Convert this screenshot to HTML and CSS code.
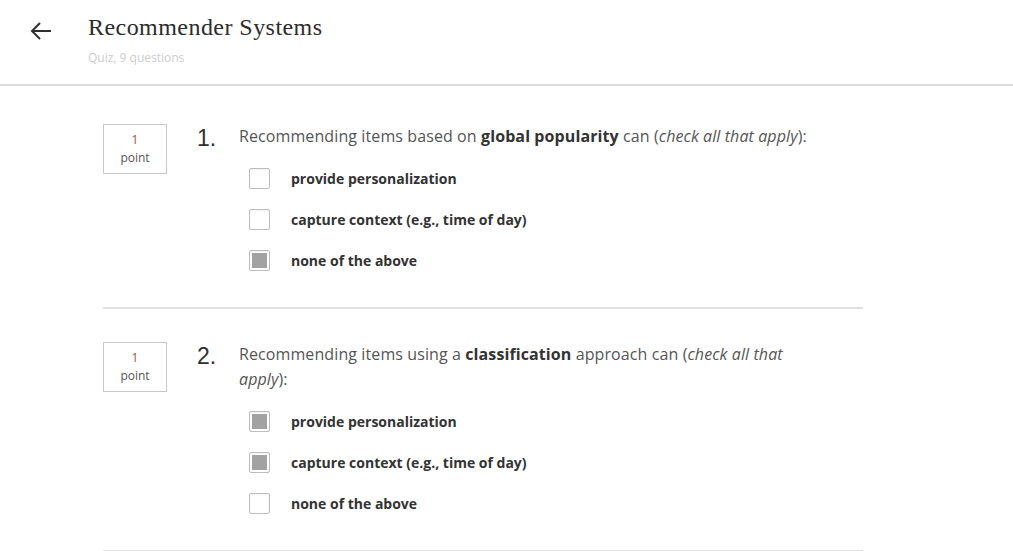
FILE: index.html
```html
<!DOCTYPE html>
<html>
<head>
<meta charset="utf-8">
<link rel="stylesheet" href="styles.css">
</head>
<body>
<header class="header">
  <a class="back" href="#" aria-label="Back">
    <svg width="22" height="20" viewBox="0 0 22 20"><path d="M21 10H2M10 2L2 10l8 8" fill="none" stroke="#2f2f2f" stroke-width="2"/></svg>
  </a>
  <div class="titles">
    <h1 class="title">Recommender Systems</h1>
    <div class="subtitle">Quiz, 9 questions</div>
  </div>
</header>
<main class="quiz">
  <section class="question">
    <div class="points"><span class="pnum">1</span><span class="plabel">point</span></div>
    <div class="qnum">1.</div>
    <div class="qbody">
      <p class="qtext">Recommending items based on <b>global popularity</b> can (<i>check all that apply</i>):</p>
      <ul class="options">
        <li class="option"><span class="cb"></span><span class="olabel">provide personalization</span></li>
        <li class="option"><span class="cb"></span><span class="olabel">capture context (e.g., time of day)</span></li>
        <li class="option"><span class="cb checked"></span><span class="olabel">none of the above</span></li>
      </ul>
    </div>
  </section>
  <section class="question">
    <div class="points"><span class="pnum">1</span><span class="plabel">point</span></div>
    <div class="qnum">2.</div>
    <div class="qbody">
      <p class="qtext">Recommending items using a <b>classification</b> approach can (<i>check all that apply</i>):</p>
      <ul class="options">
        <li class="option"><span class="cb checked"></span><span class="olabel">provide personalization</span></li>
        <li class="option"><span class="cb checked"></span><span class="olabel">capture context (e.g., time of day)</span></li>
        <li class="option"><span class="cb"></span><span class="olabel">none of the above</span></li>
      </ul>
    </div>
  </section>
</main>
</body>
</html>
```
FILE: styles.css
```css
* { box-sizing: border-box; }
html, body { margin: 0; padding: 0; background: #fff; }
body { font-family: "Open Sans", "Liberation Sans", sans-serif; color: #333; overflow: hidden; }

.header {
  height: 86px;
  border-bottom: 2px solid #dcdcdc;
  display: flex;
  align-items: flex-start;
  padding-left: 30px;
}
.back { display: block; margin-top: 21px; width: 22px; height: 20px; }
.back svg { display: block; }
.titles { margin-left: 36px; padding-top: 12px; }
.title {
  margin: 0;
  font-family: "Liberation Serif", "DejaVu Serif", serif;
  font-weight: 400;
  font-size: 24px;
  letter-spacing: 0.45px;
  line-height: 30px;
  color: #2c2c2c;
}
.subtitle {
  margin-top: 9px;
  font-size: 12px;
  line-height: 14px;
  color: #cdcdcd;
}

.quiz { margin-left: 103px; width: 760px; padding-top: 38px; }
.question {
  display: flex;
  align-items: flex-start;
  padding: 0 0 36px;
  border-bottom: 2px solid #e0e0e0;
}
.question + .question { padding-top: 33px; }
.points {
  width: 64px;
  height: 50px;
  border: 1px solid #c8c8c8;
  display: flex;
  flex-direction: column;
  align-items: center;
  justify-content: center;
  font-size: 12px;
  line-height: 18px;
  color: #555;
}
.pnum { color: #b04a3e; }
.qnum {
  margin-left: 30px;
  width: 42px;
  font-family: "Liberation Sans", Arial, sans-serif;
  font-size: 23px;
  line-height: 25px;
  padding-top: 2px;
  color: #2f2f2f;
}
.qbody { width: 580px; }
.qtext {
  margin: 0;
  font-size: 16px;
  line-height: 25px;
  letter-spacing: 0.1px;
  color: #555;
}
.qtext b { color: #333; font-weight: 700; }
.options { list-style: none; margin: 19px 0 0; padding: 0 0 0 10px; display: flex; flex-direction: column; gap: 20px; }
.option { display: flex; align-items: center; height: 21px; }
.cb {
  width: 21px;
  height: 21px;
  border: 1px solid #bdbdbd;
  border-radius: 2px;
  background: #fff;
  box-shadow: inset 0 1px 2px rgba(0,0,0,0.06);
  padding: 2px;
  flex: none;
}
.cb.checked::before {
  content: "";
  display: block;
  width: 100%;
  height: 100%;
  background: #a2a2a2;
}
.olabel {
  margin-left: 21px;
  font-size: 14px;
  font-weight: 700;
  color: #333;
}
```
